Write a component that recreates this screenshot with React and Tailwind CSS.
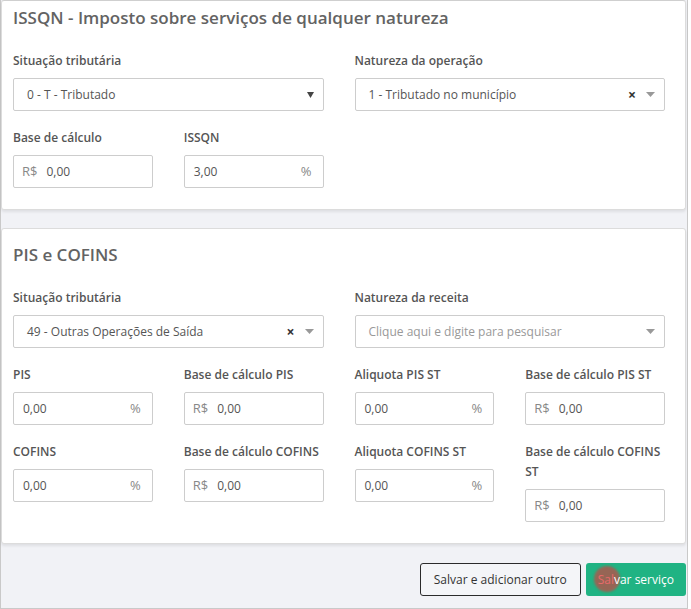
import { useState } from 'react';

const font = { fontFamily: '"Open Sans", "Liberation Sans", sans-serif' };

function Label({ children }) {
  return <label className="block text-[12px] font-semibold leading-[20px] text-[#555]">{children}</label>;
}

function Caret({ dark }) {
  return (
    <svg width="9" height="5" viewBox="0 0 9 5" className="shrink-0">
      <path d="M0 0 L9 0 L4.5 5 Z" fill={dark ? '#444' : '#999'} />
    </svg>
  );
}

function NativeSelect({ value }) {
  return (
    <div className="mt-[7px] flex h-[33px] items-center justify-between rounded-[2px] border border-[#cdcdcd] bg-white pl-[13px] pr-[9px] text-[12px] text-[#555]">
      <span>{value}</span>
      <svg width="7" height="7" viewBox="0 0 7 7">
        <path d="M0 1 L7 1 L3.5 7 Z" fill="#444" />
      </svg>
    </div>
  );
}

function Select2({ value, placeholder }) {
  return (
    <div className="mt-[7px] flex h-[33px] items-center justify-between rounded-[2px] border border-[#cdcdcd] bg-white pl-[13px] pr-[9px] text-[12px]">
      {value ? <span className="text-[#555]">{value}</span> : <span className="text-[#999]">{placeholder}</span>}
      <div className="flex items-center gap-[10px]">
        {value && <span className="text-[14px] font-bold leading-none text-[#333]">×</span>}
        <Caret />
      </div>
    </div>
  );
}

function MoneyInput() {
  return (
    <div className="mt-[7px] flex h-[33px] items-center rounded-[2px] border border-[#cdcdcd] bg-white px-[8px] text-[12px] text-[#555]">
      <span className="text-[#888] text-[13px]">R$</span>
      <span className="ml-[9px]">0,00</span>
    </div>
  );
}

function PercentInput({ value = '0,00' }) {
  return (
    <div className="mt-[7px] flex h-[33px] items-center justify-between rounded-[2px] border border-[#cdcdcd] bg-white pl-[9px] pr-[11px] text-[12px] text-[#555]">
      <span>{value}</span>
      <span className="text-[#888] text-[13px]">%</span>
    </div>
  );
}

function Card({ title, top = 'pt-[13px]', children }) {
  return (
    <section className={`w-[685px] rounded-[3px] border border-[#dcdcdc] bg-white pl-[11px] pr-[20px] pb-[21px] shadow-[0_2px_3px_rgba(0,0,0,0.08)] ${top}`}>
      <h2 className="text-[17px] font-semibold leading-[26px] text-[#636363]">{title}</h2>
      <div className="mt-[20px]">{children}</div>
    </section>
  );
}

export default function App() {
  const [ripple] = useState(true);
  return (
    <div style={font} className="h-[609px] w-[691px] bg-white">
      <div className="flex h-[609px] w-[688px] flex-col border-x border-b border-[#c9c9c9] bg-[#f1f2f6]">
        <Card title="ISSQN - Imposto sobre serviços de qualquer natureza" top="pt-[4px] border-t-[#cfcfcf]">
          <div className="grid grid-cols-4 gap-x-[31px]">
            <div className="col-span-2">
              <Label>Situação tributária</Label>
              <NativeSelect value="0 - T - Tributado" />
            </div>
            <div className="col-span-2">
              <Label>Natureza da operação</Label>
              <Select2 value="1 - Tributado no município" />
            </div>
            <div className="mt-[17px]">
              <Label>Base de cálculo</Label>
              <MoneyInput />
            </div>
            <div className="mt-[17px]">
              <Label>ISSQN</Label>
              <PercentInput value="3,00" />
            </div>
          </div>
        </Card>

        <div className="mt-[18px]">
          <Card title="PIS e COFINS">
            <div className="grid grid-cols-4 gap-x-[31px]">
              <div className="col-span-2">
                <Label>Situação tributária</Label>
                <Select2 value="49 - Outras Operações de Saída" />
              </div>
              <div className="col-span-2">
                <Label>Natureza da receita</Label>
                <Select2 placeholder="Clique aqui e digite para pesquisar" />
              </div>
              <div className="mt-[17px]">
                <Label>PIS</Label>
                <PercentInput />
              </div>
              <div className="mt-[17px]">
                <Label>Base de cálculo PIS</Label>
                <MoneyInput />
              </div>
              <div className="mt-[17px]">
                <Label>Aliquota PIS ST</Label>
                <PercentInput />
              </div>
              <div className="mt-[17px]">
                <Label>Base de cálculo PIS ST</Label>
                <MoneyInput />
              </div>
              <div className="mt-[17px]">
                <Label>COFINS</Label>
                <PercentInput />
              </div>
              <div className="mt-[17px]">
                <Label>Base de cálculo COFINS</Label>
                <MoneyInput />
              </div>
              <div className="mt-[17px]">
                <Label>Aliquota COFINS ST</Label>
                <PercentInput />
              </div>
              <div className="mt-[17px]">
                <Label>Base de cálculo COFINS ST</Label>
                <MoneyInput />
              </div>
            </div>
          </Card>
        </div>

        <div className="mt-[19px] flex justify-end gap-[5px] pr-[1px]">
          <button className="h-[33px] rounded-[3px] border border-[#2b2b2b] bg-[#f4f5f8] px-[13px] text-[12px] text-[#333]">
            Salvar e adicionar outro
          </button>
          <button className="relative h-[33px] overflow-hidden rounded-[3px] bg-[#20b383] px-[12px] text-[12px] text-white">
            {ripple && (
              <span className="absolute left-[8px] top-[3px] h-[26px] w-[26px] rounded-full bg-[#b5524a] opacity-80 blur-[1px]" />
            )}
            <span className="relative">
              <span className="text-[#e86a6a]">Sal</span>var serviço
            </span>
          </button>
        </div>
      </div>
    </div>
  );
}
